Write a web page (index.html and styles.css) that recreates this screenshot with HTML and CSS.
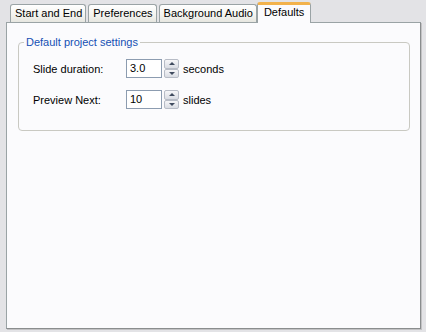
FILE: index.html
```html
<!DOCTYPE html>
<html>
<head>
<meta charset="utf-8">
<link rel="stylesheet" href="styles.css">
</head>
<body>
<div class="window">
  <div class="tabs">
    <div class="tab">Start and End</div>
    <div class="tab">Preferences</div>
    <div class="tab">Background Audio</div>
    <div class="tab active">Defaults</div>
  </div>
  <div class="panel">
    <fieldset class="group">
      <legend>Default project settings</legend>
      <div class="row">
        <span class="lbl">Slide duration:</span>
        <span class="num">3.0</span>
        <span class="spin"><span class="btn up"><i></i></span><span class="btn down"><i></i></span></span>
        <span class="unit">seconds</span>
      </div>
      <div class="row">
        <span class="lbl">Preview Next:</span>
        <span class="num">10</span>
        <span class="spin"><span class="btn up"><i></i></span><span class="btn down"><i></i></span></span>
        <span class="unit">slides</span>
      </div>
    </fieldset>
  </div>
</div>
</body>
</html>
```
FILE: styles.css
```css
html, body {
  margin: 0;
  height: 100%;
}
body {
  background: #e3e3e6;
  font: 11px "Liberation Sans", Arial, sans-serif;
  color: #000;
}
.window {
  box-sizing: border-box;
  height: 332px;
  padding: 2px 5px 3px 6px;
  display: flex;
  flex-direction: column;
}
.tabs {
  display: flex;
  align-items: flex-end;
  height: 20px;
  padding-left: 4px;
  position: relative;
  z-index: 1;
}
.tab {
  box-sizing: border-box;
  height: 18px;
  padding: 0 3px 0 4px;
  margin-right: 2px;
  line-height: 17px;
  border: 1px solid #9aa3a5;
  border-bottom: none;
  border-radius: 3px 3px 0 0;
  background: linear-gradient(#ffffff, #f3f3ef 60%, #e6e6e0);
  white-space: nowrap;
}
.tab.active {
  height: 21px;
  margin: 0 0 -1px -2px;
  padding: 0 6px;
  line-height: 15px;
  border-top: 3px solid #f2b24c;
  background: #fbfbfd;
}
.panel {
  flex: 1;
  box-sizing: border-box;
  background: #fbfbfd;
  border: 1px solid #9aa3a5;
  border-right-color: #8a8d8e;
  border-bottom-color: #8a8d8e;
  box-shadow: 1px 1px 0 #c2c2c4;
  padding: 13px 10px 0 11px;
}
.group {
  margin: 0;
  padding: 0 14px 21px 14px;
  border: 1px solid #c9c9c2;
  border-radius: 4px;
}
.group legend {
  margin-left: -9px;
  padding: 0 2px;
  color: #1650b4;
  line-height: 13px;
}
.row {
  display: flex;
  align-items: center;
  height: 19px;
  margin-top: 10px;
}
.row + .row {
  margin-top: 12px;
}
.lbl {
  width: 93px;
}
.num {
  box-sizing: border-box;
  width: 36px;
  height: 19px;
  line-height: 17px;
  padding-left: 3px;
  background: #fff;
  border: 1px solid #8c9cb0;
}
.spin {
  display: flex;
  flex-direction: column;
  margin-left: 2px;
  width: 15px;
  height: 19px;
}
.btn {
  flex: 1;
  box-sizing: border-box;
  display: flex;
  align-items: center;
  justify-content: center;
  border: 1px solid #b7bcc6;
  border-radius: 2px;
  background: linear-gradient(#f6f6f8, #d9dce3);
}
.btn i {
  width: 0;
  height: 0;
  border-left: 3px solid transparent;
  border-right: 3px solid transparent;
}
.up i {
  border-bottom: 3px solid #3f4a5e;
}
.down i {
  border-top: 3px solid #3f4a5e;
}
.unit {
  margin-left: 4px;
}
```
